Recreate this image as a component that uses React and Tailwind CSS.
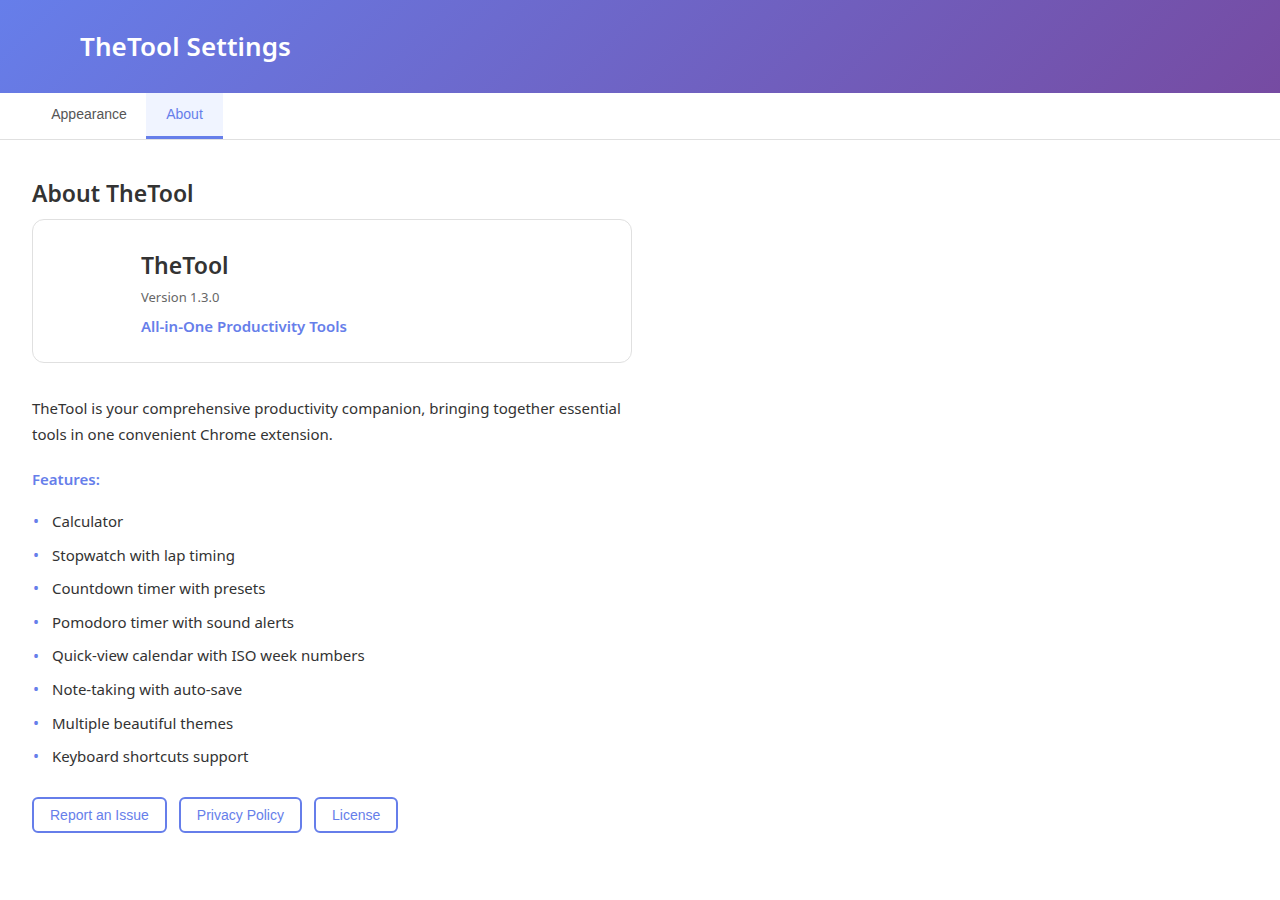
import React from "react";

const features = [
  "Calculator",
  "Stopwatch with lap timing",
  "Countdown timer with presets",
  "Pomodoro timer with sound alerts",
  "Quick-view calendar with ISO week numbers",
  "Note-taking with auto-save",
  "Multiple beautiful themes",
  "Keyboard shortcuts support",
];

const App = () => {
  return (
    <div className="min-h-screen bg-white font-['Noto_Sans',sans-serif] text-[#333]">
      {/* Header */}
      <header className="h-[93px] flex items-center px-[80px] bg-[linear-gradient(135deg,#667eea_0%,#764ba2_100%)]">
        <h1 className="text-[26px] font-semibold text-white tracking-[0.1px]">TheTool Settings</h1>
      </header>

      {/* Tabs */}
      <nav className="flex px-[32px] border-b border-[#e0e0e0] font-['Liberation_Sans',sans-serif] text-[14px]">
        <button className="h-[46px] w-[114px] text-[#555] border-b-[3px] border-transparent">Appearance</button>
        <button className="h-[46px] w-[77px] text-[#667eea] bg-[#f0f4ff] border-b-[3px] border-[#667eea]">About</button>
      </nav>

      <main className="px-[32px] pt-[36px] max-w-[664px]">
        <h2 className="text-[23px] font-semibold text-[#333] leading-[34px]">About TheTool</h2>

        {/* Card */}
        <div className="mt-[9px] border border-[#e0e0e0] rounded-[12px] h-[144px] pl-[108px] pt-[28px]">
          <h3 className="text-[23px] font-semibold text-[#333] leading-[34px]">TheTool</h3>
          <p className="mt-[6px] text-[13px] text-[#666]">Version 1.3.0</p>
          <p className="mt-[7px] text-[15px] font-semibold text-[#667eea]">All-in-One Productivity Tools</p>
        </div>

        <p className="mt-[32px] text-[15px] leading-[26px]">
          TheTool is your comprehensive productivity companion, bringing together essential tools in one convenient Chrome extension.
        </p>

        <h4 className="mt-[21px] text-[15px] font-semibold text-[#667eea]">Features:</h4>

        <ul className="mt-[14px]">
          {features.map((f) => (
            <li key={f} className="flex items-center h-[33.6px] text-[15px]">
              <span className="w-[20px] pl-[1px] text-[#667eea] text-[16px] leading-none">•</span>
              {f}
            </li>
          ))}
        </ul>

        <div className="mt-[24px] flex gap-[12px] font-['Liberation_Sans',sans-serif] text-[14px]">
          {["Report an Issue", "Privacy Policy", "License"].map((b) => (
            <button key={b} className="h-[36px] px-[16px] border-2 border-[#667eea] rounded-[6px] text-[#667eea] bg-white">
              {b}
            </button>
          ))}
        </div>
      </main>
    </div>
  );
};

export default App;
